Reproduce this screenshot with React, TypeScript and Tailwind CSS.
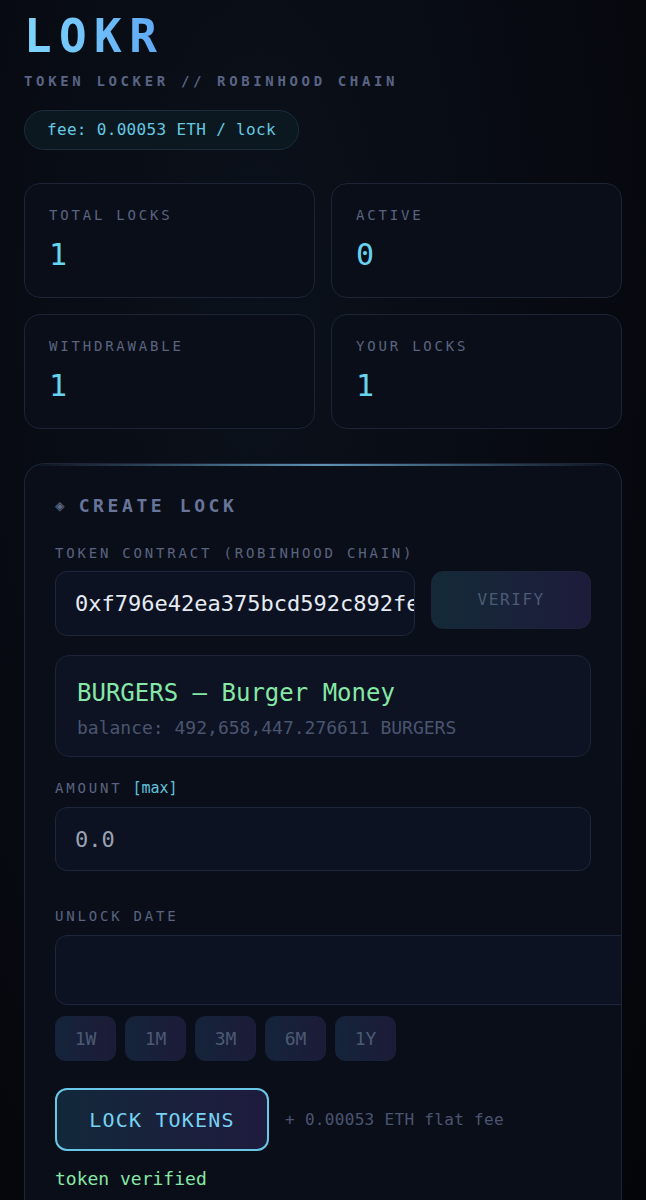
const stats = [
  { label: "TOTAL LOCKS", value: "1" },
  { label: "ACTIVE", value: "0" },
  { label: "WITHDRAWABLE", value: "1" },
  { label: "YOUR LOCKS", value: "1" },
];

const presets = ["1W", "1M", "3M", "6M", "1Y"];

function StatCard({ label, value }: { label: string; value: string }) {
  return (
    <div className="h-[115px] rounded-2xl border border-[#1c2436] bg-[#0a0e19] px-6 pt-[21px]">
      <div className="text-[14px] leading-[20px] tracking-[0.2em] text-[#5a6480]">{label}</div>
      <div className="mt-[12px] text-[30px] leading-[36px] text-[#67d4ef]">{value}</div>
    </div>
  );
}

function CreateLock() {
  return (
    <section className="relative mt-[34px] overflow-hidden rounded-t-[20px] border border-b-0 border-[#1c2436] bg-[#0a0e19] px-[30px] pb-10 pt-[30px]">
      <div className="absolute left-0 right-0 top-0 h-[2px] bg-linear-to-r from-transparent via-[#5e93b4] to-transparent" />
      <h2 className="flex items-center text-[18px] font-bold leading-[24px] tracking-[0.2em] text-[#68759a]">
        <span className="mr-[14px] text-[16px] tracking-normal text-[#5c6784]">◈</span>
        CREATE LOCK
      </h2>

      <label className="mt-[26px] block text-[14px] leading-[18px] tracking-[0.2em] text-[#5a6480]">
        TOKEN CONTRACT (ROBINHOOD CHAIN)
      </label>
      <div className="mt-[9px] flex items-start gap-4">
        <div className="flex h-[65px] w-[361px] items-center overflow-hidden rounded-xl border border-[#1e273a] bg-[#0c1221] pl-[19px]">
          <span className="whitespace-nowrap text-[22px] text-[#e6ebf3]">0xf796e42ea375bcd592c892fe3a</span>
        </div>
        <button
          type="button"
          className="h-[58px] w-[160px] rounded-xl border border-[#1c2538] bg-linear-to-r from-[#132a38] to-[#1d1b3b] text-[16px] tracking-[0.1em] text-[#4c5b74]"
        >
          VERIFY
        </button>
      </div>

      <div className="mt-[19px] h-[102px] rounded-[14px] border border-[#1c2436] bg-[#0d1322] px-[21px] pt-[22px]">
        <div className="text-[24px] leading-[30px] text-[#86e8a6]">BURGERS — Burger Money</div>
        <div className="mt-[8px] text-[18px] leading-[24px] text-[#4a5570]">balance: 492,658,447.276611 BURGERS</div>
      </div>

      <div className="mt-[22px] flex items-center text-[14px] leading-[18px]">
        <span className="tracking-[0.2em] text-[#5a6480]">AMOUNT</span>
        <span className="ml-[10px] text-[15px] text-[#5fc3dc]">[max]</span>
      </div>
      <div className="mt-[10px] flex h-[64px] items-center rounded-xl border border-[#1e273a] bg-[#0c1221] pl-[19px]">
        <span className="text-[22px] text-[#9aa2b2]">0.0</span>
      </div>

      <label className="mt-[36px] block text-[14px] leading-[18px] tracking-[0.2em] text-[#5a6480]">UNLOCK DATE</label>
      <div className="mt-[10px] h-[70px] w-[620px] rounded-xl border border-[#1e273a] bg-[#0c1221]" />

      <div className="mt-[11px] flex gap-[9px]">
        {presets.map((p) => (
          <button
            key={p}
            type="button"
            className="h-[45px] w-[61px] rounded-[10px] border border-[#18213a] bg-linear-to-r from-[#14243a] to-[#1c1b38] text-[18px] text-[#4c5a74]"
          >
            {p}
          </button>
        ))}
      </div>

      <div className="mt-[27px] flex items-center gap-4">
        <button
          type="button"
          className="h-[63px] w-[214px] rounded-xl border-2 border-[#6ac6e6] bg-linear-to-r from-[#12283a] to-[#1e1b3e] text-[20px] tracking-[0.06em] text-[#78d2f2]"
        >
          LOCK TOKENS
        </button>
        <span className="text-[16px] tracking-[0.02em] text-[#4a5570]">+ 0.00053 ETH flat fee</span>
      </div>

      <div className="mt-[16px] text-[18px] leading-[24px] text-[#86e8a6]">token verified</div>
    </section>
  );
}

export default function App() {
  return (
    <div className="min-h-[1200px] overflow-hidden bg-[#06090f] bg-[radial-gradient(ellipse_at_40%_25%,#0b111b_0%,#070a11_55%,#030508_100%)] px-6 pt-[13px] font-['DejaVu_Sans_Mono','Liberation_Mono',monospace]">
      <h1 className="w-fit bg-linear-to-r from-[#7fd6fb] to-[#5fa8f6] bg-clip-text text-[46px] font-bold leading-[46px] tracking-[0.16em] text-transparent">
        LOKR
      </h1>
      <p className="mt-[14px] text-[14px] font-bold leading-[16px] tracking-[0.26em] text-[#5a6485]">
        TOKEN LOCKER // ROBINHOOD CHAIN
      </p>
      <div className="mt-[21px] inline-flex h-[40px] items-center rounded-full border border-[#1c2c3c] bg-[#0b1820] px-[22px] text-[16px] tracking-[0.02em] text-[#66c8e2]">
        fee: 0.00053 ETH / lock
      </div>

      <div className="mt-[33px] grid grid-cols-2 gap-4">
        {stats.map((s) => (
          <StatCard key={s.label} label={s.label} value={s.value} />
        ))}
      </div>

      <CreateLock />
    </div>
  );
}
